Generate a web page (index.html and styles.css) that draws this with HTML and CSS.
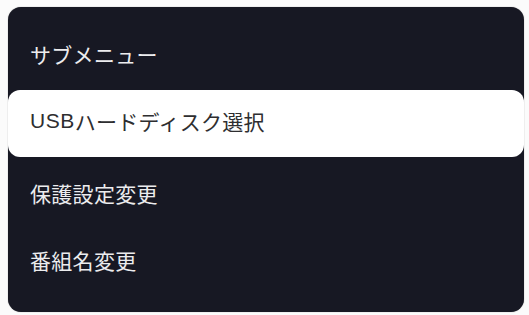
FILE: index.html
```html
<!DOCTYPE html>
<html lang="ja">
<head>
<meta charset="utf-8">
<link rel="stylesheet" href="styles.css">
</head>
<body>
<div class="panel">
  <div class="item">サブメニュー</div>
  <div class="item selected"><span class="latin">USB</span>ハードディスク選択</div>
  <div class="item after">保護設定変更</div>
  <div class="item">番組名変更</div>
</div>
</body>
</html>
```
FILE: styles.css
```css
html, body {
  margin: 0;
  padding: 0;
  background: #fbfbfb;
  width: 529px;
  height: 315px;
  overflow: hidden;
}
body {
  padding: 7px 5px 0 8px;
  box-sizing: border-box;
  font-family: "Liberation Sans", "Noto Sans CJK JP", sans-serif;
}
.panel {
  width: 516px;
  height: 305px;
  background: #171823;
  border-radius: 13px;
  padding-top: 16px;
  box-sizing: border-box;
  display: flex;
  flex-direction: column;
  box-shadow: 0 0 1px rgba(0,0,0,0.5);
}
.item {
  height: 67px;
  box-sizing: border-box;
  display: flex;
  align-items: center;
  padding-left: 22px;
  padding-bottom: 5px;
  font-size: 21px;
  letter-spacing: 0.3px;
  color: #ececee;
}
.latin {
  letter-spacing: 0.5px;
}
.item.selected {
  background: #ffffff;
  color: #2e2e30;
  border-radius: 12px;
}
.item.after {
  margin-top: 5px;
}
```
